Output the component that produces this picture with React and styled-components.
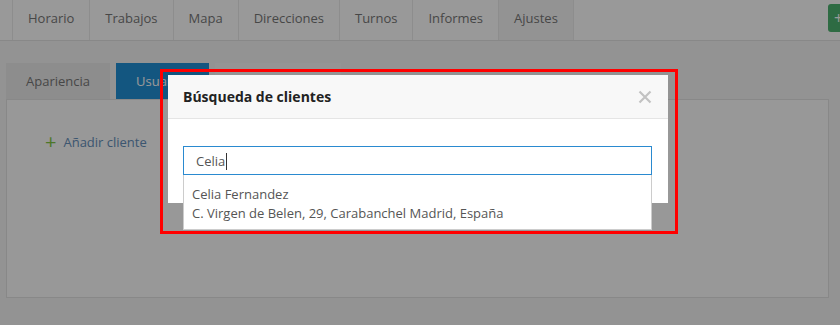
import styled, { createGlobalStyle } from 'styled-components';

const GlobalStyle = createGlobalStyle`
	html, body {
		margin: 0;
		padding: 0;
		height: 100%;
		overflow: hidden;
	}
	body {
		background: #f5f5f5;
		font-family: 'Open Sans', 'Noto Sans', sans-serif;
		color: #333;
	}
`;

const navItems = ['Horario', 'Trabajos', 'Mapa', 'Direcciones', 'Turnos', 'Informes', 'Ajustes'];

function App() {
	return (
		<>
			<GlobalStyle />
			<Page>
				<TopNav>
					{navItems.map((item) => (
						<NavItem key={item} $active={item === 'Ajustes'}>
							{item}
						</NavItem>
					))}
					<Spacer />
					<GreenButton>+</GreenButton>
				</TopNav>

				<Content>
					<Tabs>
						<Tab>Apariencia</Tab>
						<Tab $active>Usuarios</Tab>
						<Tab $light>Notificaciones</Tab>
					</Tabs>
					<Panel>
						<AddLink>
							<span className="plus">+</span>
							Añadir cliente
						</AddLink>
					</Panel>
				</Content>
			</Page>

			<Backdrop />

			<Modal>
				<ModalHeader>
					<h4>Búsqueda de clientes</h4>
					<CloseBtn aria-label="Cerrar">
						<svg width="14" height="14" viewBox="0 0 14 14">
							<path d="M1.5 1.5 L12.5 12.5 M12.5 1.5 L1.5 12.5" stroke="#c2c2c2" strokeWidth="2.2" />
						</svg>
					</CloseBtn>
				</ModalHeader>
				<ModalBody>
					<SearchWrap>
						<SearchInput>
							Celia<span className="caret" />
						</SearchInput>
						<Suggestions>
							<li>Celia Fernandez</li>
							<li>C. Virgen de Belen, 29, Carabanchel Madrid, España</li>
						</Suggestions>
					</SearchWrap>
				</ModalBody>
			</Modal>

			<Highlight />
		</>
	);
}

export default App;

const Page = styled.div`
	min-height: 325px;
`;

const TopNav = styled.nav`
	display: flex;
	align-items: stretch;
	height: 41px;
	padding-left: 12px;
	background: #fff;
	border-bottom: 1px solid #e3e3e3;
	box-sizing: border-box;
`;

const NavItem = styled.div`
	display: flex;
	align-items: center;
	padding: 0 15px 4px;
	font-size: 13px;
	color: #777;
	border-left: 1px solid #ececec;
	border-right: ${({ $active }) => ($active ? '1px solid #ececec' : 'none')};
	background: ${({ $active }) => ($active ? '#f6f6f6' : 'transparent')};
`;

const Spacer = styled.div`
	flex: 1;
`;

const GreenButton = styled.div`
	align-self: flex-start;
	margin-top: 4px;
	width: 20px;
	height: 28px;
	margin-right: -8px;
	border-radius: 3px 0 0 3px;
	background: #4db270;
	color: #fff;
	font-size: 16px;
	line-height: 28px;
	padding-left: 6px;
	box-sizing: border-box;
	overflow: hidden;
`;

const Content = styled.div`
	padding: 22px 11px 0 6px;
`;

const Tabs = styled.div`
	display: flex;
	gap: 6px;
`;

const Tab = styled.div`
	height: 36px;
	display: flex;
	align-items: center;
	padding: 0 20px;
	font-size: 13px;
	color: ${({ $active }) => ($active ? '#fff' : '#777')};
	background: ${({ $active, $light }) => ($active ? '#208fd5' : $light ? '#f8f8f8' : '#ececec')};
	min-width: ${({ $light }) => ($light ? '125px' : '0')};
	box-sizing: border-box;
`;

const Panel = styled.div`
	height: 199px;
	background: #fdfdfd;
	border: 1px solid #e3e3e3;
	box-sizing: border-box;
	padding: 32px 38px;
`;

const AddLink = styled.div`
	display: flex;
	align-items: center;
	gap: 7px;
	font-size: 13px;
	color: #648fbb;

	.plus {
		color: #7fc744;
		font-size: 20px;
		line-height: 1;
		font-weight: 400;
	}
`;

const Backdrop = styled.div`
	position: fixed;
	inset: 0;
	background: rgba(0, 0, 0, 0.4);
`;

const Modal = styled.div`
	position: fixed;
	left: 168px;
	top: 75px;
	width: 500px;
	background: #fff;
`;

const ModalHeader = styled.div`
	display: flex;
	align-items: center;
	justify-content: space-between;
	height: 44px;
	padding: 0 15px;
	background: #f8f8f8;
	border-bottom: 1px solid #e5e5e5;
	box-sizing: border-box;

	h4 {
		margin: 0;
		font-size: 14px;
		font-weight: 700;
		color: #222;
	}
`;

const CloseBtn = styled.button`
	border: none;
	background: none;
	padding: 0;
	margin-right: 1px;
	display: flex;
	cursor: pointer;
`;

const ModalBody = styled.div`
	padding: 27px 16px 28px 15px;
`;

const SearchWrap = styled.div`
	position: relative;
`;

const SearchInput = styled.div`
	height: 29px;
	border: 1px solid #2a8ad0;
	box-sizing: border-box;
	padding: 1px 12px 0;
	display: flex;
	align-items: center;
	font-size: 13px;
	color: #555;

	.caret {
		display: inline-block;
		width: 1px;
		height: 17px;
		background: #333;
		margin-left: 1px;
	}
`;

const Suggestions = styled.ul`
	position: absolute;
	left: 0;
	right: 0;
	top: 29px;
	margin: 0;
	padding: 10px 8px 6px;
	list-style: none;
	background: #fff;
	border: 1px solid #ccc;
	border-top: none;
	font-size: 13px;
	line-height: 19px;
	color: #555;
`;

const Highlight = styled.div`
	position: fixed;
	left: 160px;
	top: 69px;
	width: 518px;
	height: 165px;
	border: 3px solid #f00;
	box-sizing: border-box;
	pointer-events: none;
`;
